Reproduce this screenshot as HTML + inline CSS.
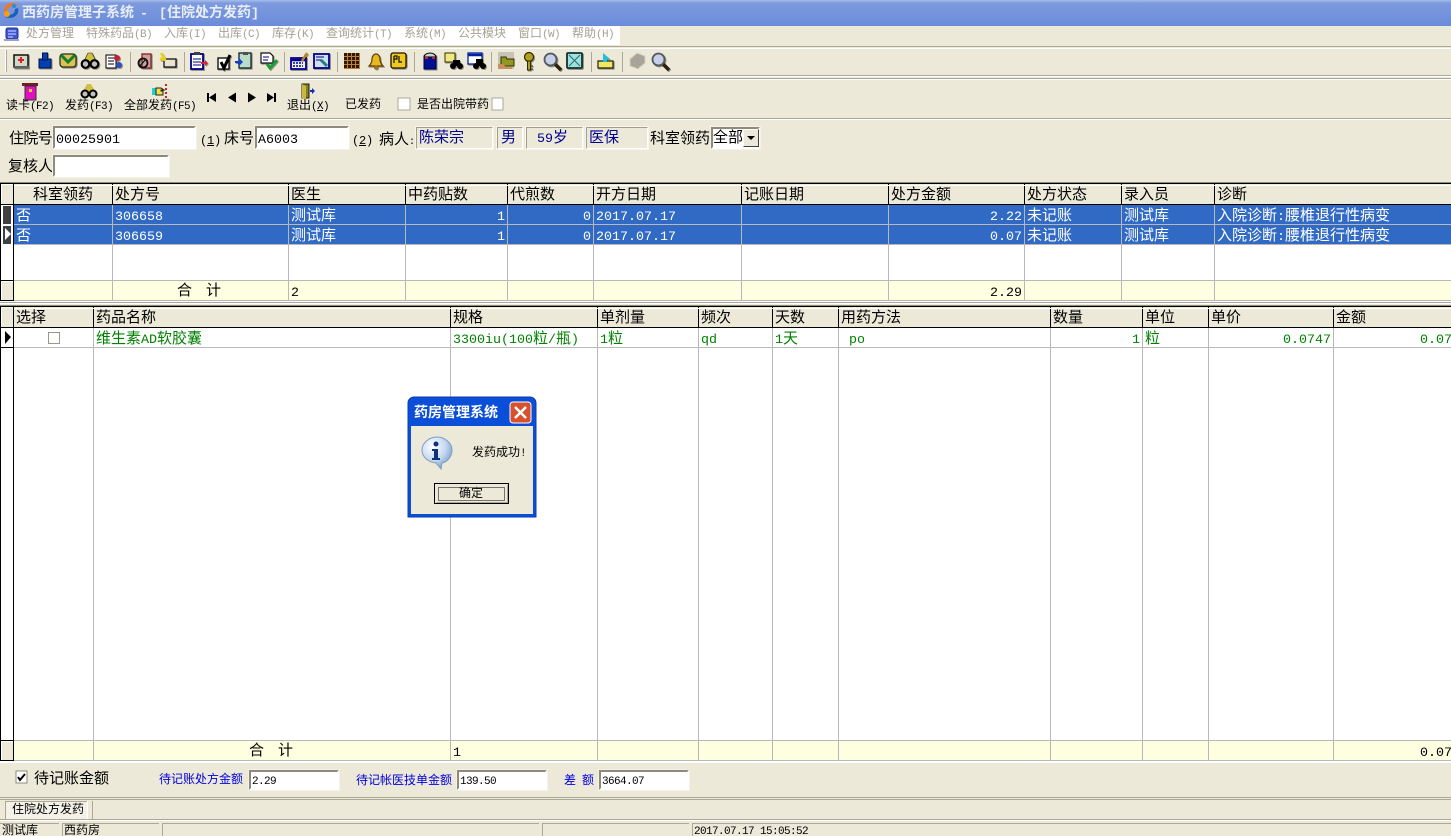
<!DOCTYPE html>
<html lang="zh"><head><meta charset="utf-8"><title>西药房管理子系统</title>
<style>
html,body{margin:0;padding:0;width:1451px;height:836px;overflow:hidden;background:#ece9d8}
#a{position:relative;width:1451px;height:836px;overflow:hidden;background:#ece9d8;font-family:"WenQuanYi Zen Hei","Noto Sans CJK SC",sans-serif;color:#000}
svg{position:absolute;left:0;top:0}
.t{position:absolute;white-space:nowrap;line-height:20px;font-size:15px}
.s{font-size:12px}.m{font-size:15px}
.r{text-align:right}
.w{color:#fff}.g{color:#008000}.b{color:#0000e0}.n{color:#000090}.y{color:#a5a294}
i{font-style:normal;font-family:"Liberation Mono",monospace}
.m i,.t i{font-size:13.33px}
.s i{font-size:11px;letter-spacing:-.6px}
.in{position:absolute;box-sizing:border-box;background:#fff;border:2px solid;border-color:#8e8b7c #fff #fff #8e8b7c;outline:1px solid #f4f2e8}
.lb{position:absolute;box-sizing:border-box;border:1px solid;border-color:#a09d8e #fff #fff #a09d8e;outline:1px solid #f7f5ec}
.ic{filter:drop-shadow(1px 1px 0 #8f8c7e)}
</style></head><body><div id="a">
<svg width="1451" height="836" viewBox="0 0 1451 836" xmlns="http://www.w3.org/2000/svg" shape-rendering="crispEdges">
<defs><linearGradient id="tb" x1="0" y1="0" x2="0" y2="1"><stop offset="0" stop-color="#a9bde9"/><stop offset=".12" stop-color="#7e9ade"/><stop offset="1" stop-color="#6b8cd9"/></linearGradient>
<radialGradient id="bub" cx=".35" cy=".3" r=".8"><stop offset="0" stop-color="#ffffff"/><stop offset=".55" stop-color="#c4d8f0"/><stop offset="1" stop-color="#6f95c8"/></radialGradient></defs>
<rect width="1451" height="26" fill="url(#tb)"/>
<rect y="26" width="620" height="19" fill="#fff"/>
<rect y="46" width="1451" height="1" fill="#aca899"/><rect y="48" width="1451" height="1" fill="#fff"/>
<rect y="75" width="1451" height="1" fill="#aca899"/><rect y="76" width="1451" height="1" fill="#fff"/><rect y="78" width="1451" height="1" fill="#aca899"/><rect y="79" width="1451" height="1" fill="#fff"/>
<rect y="118" width="1451" height="1" fill="#aca899"/><rect y="119" width="1451" height="1" fill="#fff"/>
<rect x="5" y="50" width="1" height="22" fill="#fff"/><rect x="6" y="50" width="1" height="22" fill="#aca899"/>
<path fill="#aca899" d="M130 52h1v20h-1zM184 52h1v20h-1zM284 52h1v20h-1zM337 52h1v20h-1zM414 52h1v20h-1zM491 52h1v20h-1zM591 52h1v20h-1zM622 52h1v20h-1z"/>

<rect y="182" width="1451" height="1" fill="#8e8b7c"/>
<rect y="183" width="1451" height="119" fill="#fff"/>
<rect y="184" width="1451" height="20" fill="#ece9d8"/>
<rect x="14" y="205" width="1437" height="39" fill="#316ac5"/>
<rect x="14" y="281" width="1437" height="19" fill="#fefee0"/>
<rect x="1" y="281" width="12" height="19" fill="#ece9d8"/>
<rect x="3" y="206" width="8" height="18" fill="#404040"/>
<rect x="3" y="226" width="8" height="18" fill="#404040"/>
<path fill="#fff" d="M5 228l6 6-6 6z" shape-rendering="auto"/>
<rect y="204" width="1451" height="1" fill="#000"/>
<path fill="#000" d="M112 184h1v20h-1zM288 184h1v20h-1zM405 184h1v20h-1zM507 184h1v20h-1zM593 184h1v20h-1zM741 184h1v20h-1zM888 184h1v20h-1zM1024 184h1v20h-1zM1121 184h1v20h-1zM1214 184h1v20h-1z"/>
<path fill="#b8b8b8" d="M112 205h1v96h-1zM288 205h1v96h-1zM405 205h1v96h-1zM507 205h1v96h-1zM593 205h1v96h-1zM741 205h1v96h-1zM888 205h1v96h-1zM1024 205h1v96h-1zM1121 205h1v96h-1zM1214 205h1v96h-1zM14 224h1437v1H14zM14 244h1437v1H14zM14 280h1437v1H14zM14 300h1437v1H14z"/>
<path fill="#fff" d="M1 184h12v1H1zM1 184h1v20H1zM14 185h1437v1H14zM1 281h12v1H1zM1 281h1v19H1z"/>
<rect x="0" y="183" width="1451" height="1" fill="#000"/>
<rect x="0" y="183" width="1" height="118" fill="#000"/>
<rect x="13" y="184" width="1" height="117" fill="#000"/>
<rect x="1" y="280" width="12" height="1" fill="#000"/>
<rect x="0" y="300" width="14" height="1" fill="#000"/>
<rect y="302" width="1451" height="1" fill="#aca899"/><rect y="303" width="1451" height="1" fill="#fff"/>

<rect y="305" width="1451" height="1" fill="#8e8b7c"/>
<rect y="306" width="1451" height="456" fill="#fff"/>
<rect y="307" width="1451" height="20" fill="#ece9d8"/>
<rect x="14" y="741" width="1437" height="19" fill="#fefee0"/>
<rect x="1" y="741" width="12" height="19" fill="#ece9d8"/>
<rect y="327" width="1451" height="1" fill="#000"/>
<path fill="#000" d="M93 307h1v20h-1zM450 307h1v20h-1zM597 307h1v20h-1zM698 307h1v20h-1zM772 307h1v20h-1zM838 307h1v20h-1zM1050 307h1v20h-1zM1142 307h1v20h-1zM1208 307h1v20h-1zM1333 307h1v20h-1z"/>
<path fill="#b8b8b8" d="M93 328h1v433h-1zM450 328h1v433h-1zM597 328h1v433h-1zM698 328h1v433h-1zM772 328h1v433h-1zM838 328h1v433h-1zM1050 328h1v433h-1zM1142 328h1v433h-1zM1208 328h1v433h-1zM1333 328h1v433h-1zM14 347h1437v1H14zM14 740h1437v1H14zM14 760h1437v1H14z"/>
<path fill="#fff" d="M1 307h12v1H1zM1 307h1v20H1zM14 308h1437v1H14zM1 741h12v1H1zM1 741h1v19H1z"/>
<rect x="0" y="306" width="1451" height="1" fill="#000"/>
<rect x="0" y="306" width="1" height="455" fill="#000"/>
<rect x="13" y="307" width="1" height="454" fill="#000"/>
<rect x="1" y="347" width="12" height="1" fill="#000"/>
<rect x="1" y="740" width="12" height="1" fill="#000"/>
<rect x="0" y="760" width="14" height="1" fill="#000"/>
<path fill="#000" d="M5 331l6 6-6 7z" shape-rendering="auto"/>
<rect x="48" y="332" width="11" height="11" fill="#fff" stroke="#9a9788" stroke-width="1" transform="translate(.5 .5)"/>

<rect y="762" width="1451" height="1" fill="#fff"/>
<rect y="797" width="1451" height="1" fill="#aca899"/><rect y="799" width="1451" height="1" fill="#aca899"/>
<rect y="819" width="1451" height="1" fill="#aca899"/><rect y="820" width="1451" height="1" fill="#fff"/>
<rect x="5" y="801" width="82" height="18" fill="#f4f2e8"/>
<path fill="#aca899" d="M5 801h82v1H5zM5 801h1v18H5z"/><path fill="#fff" d="M87 801h1v18h-1z"/><path fill="#aca899" d="M92 801h1v18h-1z"/>
<path fill="#aca899" d="M0 823h59v1H0zM62 823h97v1H62zM62 823h1v13h-1zM162 823h377v1H162zM162 823h1v13h-1zM542 823h147v1H542zM542 823h1v13h-1zM692 823h759v1H692zM692 823h1v13h-1z"/>
<rect x="16" y="771" width="11" height="12" fill="#fff" stroke="#8e8b7c"/>
<path d="M18 777l2 3 5-6" fill="none" stroke="#000" stroke-width="2" shape-rendering="auto"/>
<rect x="398" y="98" width="12" height="12" fill="#fff" stroke="#aca899"/>
<rect x="492" y="98" width="11" height="12" fill="#fff" stroke="#aca899"/>

<g shape-rendering="auto">
<path d="M4 12C3 6 9 1 17 4l-1 3c-5-2-9 0-9 5z" fill="#f07818"/><path d="M18 8c2 7-5 12-13 9l1-3c5 2 9 0 9-5z" fill="#1860c0"/><circle cx="7" cy="14" r="3" fill="#f0a020"/><circle cx="14" cy="6" r="2" fill="#2090e0"/>
<rect x="6" y="28" width="12" height="11" rx="2" fill="#4058d8" stroke="#203090"/><path d="M8 31h8M8 34h8M8 37h5" stroke="#d8e0ff"/><rect x="4" y="39" width="15" height="2" fill="#a0a0c0"/>

<g class="ic">
<g transform="translate(21 61)"><rect x="-7" y="-6" width="14" height="12" fill="#d0d8c8" stroke="#101010" stroke-width="1.500"/><path d="M-3-1h6M0-4v6" stroke="#e02020" stroke-width="2"/><rect x="-7" y="5" width="15" height="2.500" fill="#606060"/></g>
<g transform="translate(45 61)"><path d="M-6-2h12v9H-6z" fill="#0040b0" stroke="#001050"/><rect x="-2.500" y="-8" width="5" height="7" fill="#0040b0" stroke="#001050"/></g>
<g transform="translate(68 61)"><rect x="-8" y="-7" width="16" height="13" rx="3" fill="#e0c050" stroke="#203020" stroke-width="1.300"/><path d="M-7-6L0 1 7-6" fill="none" stroke="#108030" stroke-width="3"/></g>
<g transform="translate(90 61)"><path d="M-2-8h4L7 2H-7z" fill="#d0c040" stroke="#202020" stroke-width=".6"/><circle cx="-4.500" cy="3" r="3.800" fill="#c0c0c0" stroke="#000" stroke-width="2.200"/><circle cx="4.500" cy="3" r="3.800" fill="#c0c0c0" stroke="#000" stroke-width="2.200"/></g>
<g transform="translate(114 61)"><rect x="-8" y="-6" width="10" height="13" fill="#fff" stroke="#000"/><path d="M-6-3h6M-6 0h6M-6 3h6" stroke="#000"/><circle cx="3" cy="-3" r="3" fill="#c02040"/><circle cx="5" cy="4" r="3" fill="#3050c0"/></g>
<g transform="translate(145 61)"><rect x="-3" y="-7" width="9" height="14" fill="#d0a0a0" stroke="#802020" stroke-width="1.300"/><circle cx="-2" cy="2" r="4.500" fill="none" stroke="#101010" stroke-width="1.800"/><path d="M-6 6l7-8" stroke="#101010" stroke-width="1.300"/></g>
<g transform="translate(168 61)"><rect x="-4" y="-2" width="12" height="8" fill="#e8e4d0" stroke="#101010" stroke-width="1.300"/><path d="M-7-8l3 5-4 1 6 1" stroke="#e8d020" stroke-width="2.500" fill="none"/></g>
<g transform="translate(198 61)"><rect x="-7" y="-7" width="12" height="15" fill="#fff" stroke="#000080" stroke-width="1.800"/><rect x="-4" y="-9" width="6" height="3" fill="#404040"/><path d="M-5-2h8M-5 1h8M-5 4h8" stroke="#000080"/><path d="M3 1h4V-1l3 3-3 3V3H3z" fill="#e02040"/></g>
<g transform="translate(224 61)"><rect x="-6" y="-3" width="11" height="11" fill="#fff" stroke="#000" stroke-width="1.300"/><path d="M-3 1l3 6 6-13" fill="none" stroke="#000" stroke-width="3"/></g>
<g transform="translate(244 61)"><rect x="-5" y="-8" width="12" height="15" fill="#b8dcc8" stroke="#102030" stroke-width="1.300"/><rect x="-1" y="-9" width="5" height="3" fill="#505050"/><path d="M-9 0h4v-3l4 4-4 4V2h-4z" fill="#1040d0"/></g>
<g transform="translate(268 61)"><path d="M-7-8h9l3 3v7h-12z" fill="#fff" stroke="#101010" stroke-width="1.200"/><path d="M-5-4h6M-5-1h5" stroke="#000080"/><path d="M-1 3l3 4 7-8" fill="none" stroke="#10a030" stroke-width="2.800"/></g>
<g transform="translate(299 61)"><rect x="-8" y="-3" width="15" height="11" fill="#f0f0f0" stroke="#000090" stroke-width="1.800"/><path d="M-8-1h15" stroke="#000090" stroke-width="2.500"/><path d="M-6 2h10M-6 5h10" stroke="#000090" stroke-width="1.500" stroke-dasharray="2 1"/><path d="M3 0l5-8" stroke="#c08020" stroke-width="2.500"/></g>
<g transform="translate(322 61)"><rect x="-8" y="-7" width="15" height="14" fill="#d0e0e8" stroke="#000090" stroke-width="1.800"/><path d="M-6-4h8M-6-1h6" stroke="#000090"/><path d="M-1-1l6 6" stroke="#208080" stroke-width="3"/></g>
</g>
<g transform="translate(352 61)"><path d="M-8-8h16v16H-8z" fill="#c08030"/><path fill="#2a1808" d="M-8-8h3v3h-3zM-4-8h3v3h-3zM0-8h3v3H0zM4-8h3v3H4zM-8-4h3v3h-3zM-4-4h3v3h-3zM0-4h3v3H0zM4-4h3v3H4zM-8 0h3v3h-3zM-4 0h3v3h-3zM0 0h3v3H0zM4 0h3v3H4zM-8 4h3v3h-3zM-4 4h3v3h-3zM0 4h3v3H0zM4 4h3v3H4z"/></g>
<g class="ic">
<g transform="translate(376 61)"><path d="M-7 5c2-2 3-4 3-7a4 5 0 0 1 8 0c0 3 1 5 3 7z" fill="#e8b820" stroke="#604008" stroke-width="1.200"/><circle cy="6.500" r="2" fill="#a07010"/></g>
<g transform="translate(399 61)"><rect x="-8" y="-8" width="15" height="15" rx="2" fill="#f0c820" stroke="#201000" stroke-width="1.300"/><path d="M-5-5v7M-5-5h3v3h-3M0-5v6h3" stroke="#101000" fill="none" stroke-width="1.200"/></g>
<g transform="translate(430 61)"><rect x="-6" y="-5" width="12" height="13" fill="#001090" stroke="#000040"/><path d="M-6-4a6 4 0 0 1 12 0z" fill="#d0d0d0" stroke="#000"/><path d="M-5-3h3M2-3h3" stroke="#d02020" stroke-width="2"/></g>
<g transform="translate(453 61)"><rect x="-8" y="-8" width="10" height="9" fill="#f0e880" stroke="#303000"/><circle cx="0" cy="5" r="3" fill="#000"/><circle cx="7" cy="5" r="3" fill="#000"/><path d="M0-1h7v6H0z" fill="#000"/></g>
<g transform="translate(476 61)"><rect x="-8" y="-8" width="14" height="11" fill="#fff" stroke="#0020a0" stroke-width="1.300"/><path d="M-8-6h14" stroke="#0020a0" stroke-width="2.500"/><circle cx="0" cy="5" r="3" fill="#000"/><circle cx="7" cy="5" r="3" fill="#000"/><path d="M0-2h7v7H0z" fill="#000"/></g>
</g>
<g transform="translate(507 61)"><rect x="-9" y="-9" width="16" height="17" fill="#c8c4b4"/><path d="M-6-4h5l1 2h7v7H-6z" fill="#909820" stroke="#303000"/><path d="M-9 3h5l3 3h6v2H-9z" fill="#c89060"/></g>
<g class="ic">
<g transform="translate(529 61)"><circle cy="-4" r="4.500" fill="#b0a020" stroke="#302800" stroke-width="1.200"/><path d="M-1.500 0h3v9h-3zM1 5h3M1 8h3" fill="#b0a020" stroke="#302800"/></g>
<g transform="translate(552 61)"><path d="M3 3l6 6" stroke="#302010" stroke-width="3.500"/><circle cx="-1.500" cy="-1.500" r="6" fill="#c8d0e8" stroke="#505860" stroke-width="1.800"/></g>
<g transform="translate(575 61)"><rect x="-8" y="-8" width="15" height="15" rx="1" fill="#a0e0e0" stroke="#103030" stroke-width="1.800"/><path d="M-6-6L5 5M5-6L-6 5" stroke="#207070"/></g>
<g transform="translate(606 61)"><path d="M-8 0h15v7H-8z" fill="#f0e860" stroke="#202010" stroke-width="1.200"/><path d="M-3-8l7 6h-3v3h-4z" fill="#20c0e0"/></g>
</g>
<g transform="translate(638 61)"><path d="M-8-2l7-6 8 3v7l-7 6-8-3z" fill="#a8a598" stroke="#d8d4c4"/></g>
<g class="ic"><g transform="translate(660 61)"><path d="M3 3l6 6" stroke="#302010" stroke-width="3.500"/><circle cx="-1.500" cy="-1.500" r="6" fill="#c8d0e8" stroke="#505860" stroke-width="1.800"/></g></g>

<g transform="translate(30 92)"><rect x="-8" y="-9" width="16" height="3" fill="#702020"/><rect x="-5" y="-6" width="11" height="14" fill="#e010c0" stroke="#303030"/><rect x="-1" y="-3" width="3" height="3" fill="#e0d020"/></g>
<g transform="translate(89 91)"><path d="M-2-7h4L7 2H-7z" fill="#d0c040"/><circle cx="-4" cy="3" r="3.500" fill="#c0c0c0" stroke="#000" stroke-width="2"/><circle cx="4" cy="3" r="3.500" fill="#c0c0c0" stroke="#000" stroke-width="2"/></g>
<g transform="translate(160 91)"><path d="M-8-3h4v7h-4z" fill="#20d0d0"/><path d="M-4-3h5l3 2h-3v1h2v4h-7z" fill="#f0e040" stroke="#202020"/><path d="M6-7v2M6-3v2M6 1v2M6 5v2" stroke="#d02020" stroke-width="2"/></g>
<path fill="#000" d="M207 93h2v9h-2zM209 97.500l7-4.500v9zM228 97.500l8-5v10zM248 92.500l8 5-8 5zM267 93l7 4.500-7 4.500zM274 93h2v9h-2z"/>
<g transform="translate(306 91)"><path d="M-4-7h7v14h-7z" fill="#808020" stroke="#202000"/><path d="M-4-7l4 2v13l-4-1z" fill="#c8b840"/><path d="M4-1h2v-2l3 3-3 3V1H4z" fill="#1030c0"/></g>

<path d="M408 517V403a6 6 0 0 1 6-6h116a6 6 0 0 1 6 6v114z" fill="#0b4fd8" stroke="#0a3cb0" stroke-width="1"/>
<rect x="411" y="426" width="122" height="88" fill="#ece9d8"/>
<rect x="510" y="402" width="21" height="21" rx="3" fill="#d8502c" stroke="#fff"/>
<path d="M515 407l11 11M526 407l-11 11" stroke="#fff" stroke-width="2.500"/>
<path d="M437 437c8 0 15 6 15 13 0 7-5 12-10 13l-1 6-5-6c-8-1-14-6-14-13 0-7 7-13 15-13z" fill="url(#bub)" stroke="#7f9cc4"/>
<circle cx="436" cy="444" r="2.500" fill="#0c3278"/>
<path d="M432 449h6v9h2v2h-8v-2h2v-7h-2z" fill="#0c3278"/>
</g>
<rect x="434.500" y="483.500" width="74" height="20" fill="#ece9d8" stroke="#000"/>
<rect x="438.500" y="487.500" width="66" height="13" fill="none" stroke="#000" stroke-dasharray="1 1"/>
<path d="M507.500 485v17.500h-71" fill="none" stroke="#aca899"/>
</svg>

<div class="t w" style="left:22px;top:2px;font-size:14px;font-weight:bold;color:#e8edf8">西药房管理子系统</div>
<div class="t" style="left:140px;top:2px;color:#e8edf8;font-weight:bold"><i>-</i></div>
<div class="t" style="left:159px;top:2px;font-size:14px;font-weight:bold;color:#e8edf8"><i>[</i>住院处方发药<i>]</i></div>
<div class="t s y" style="left:26px;top:23px">处方管理</div>
<div class="t s y" style="left:86px;top:23px">特殊药品<i>(B)</i></div>
<div class="t s y" style="left:164px;top:23px">入库<i>(I)</i></div>
<div class="t s y" style="left:218px;top:23px">出库<i>(C)</i></div>
<div class="t s y" style="left:272px;top:23px">库存<i>(K)</i></div>
<div class="t s y" style="left:326px;top:23px">查询统计<i>(T)</i></div>
<div class="t s y" style="left:404px;top:23px">系统<i>(M)</i></div>
<div class="t s y" style="left:458px;top:23px">公共模块</div>
<div class="t s y" style="left:518px;top:23px">窗口<i>(W)</i></div>
<div class="t s y" style="left:572px;top:23px">帮助<i>(H)</i></div>

<div class="t s" style="left:6px;top:95px">读卡<i>(F2)</i></div>
<div class="t s" style="left:65px;top:95px">发药<i>(F3)</i></div>
<div class="t s" style="left:124px;top:95px">全部发药<i>(F5)</i></div>
<div class="t s" style="left:287px;top:95px">退出<i>(<u>X</u>)</i></div>
<div class="t s" style="left:345px;top:94px">已发药</div>
<div class="t s" style="left:417px;top:94px">是否出院带药</div>

<div class="t m" style="left:9px;top:128px;letter-spacing:-.6px">住院号</div>
<div class="in" style="left:53px;top:126px;width:143px;height:23px"></div>
<div class="t m" style="left:56px;top:128px"><i>00025901</i></div>
<div class="t m" style="left:200px;top:129px"><i style="font-size:12px;letter-spacing:-.2px">(<u>1</u>)</i></div>
<div class="t m" style="left:224px;top:128px">床号</div>
<div class="in" style="left:255px;top:126px;width:94px;height:23px"></div>
<div class="t m" style="left:258px;top:128px"><i>A6003</i></div>
<div class="t m" style="left:352px;top:129px"><i style="font-size:12px;letter-spacing:-.2px">(<u>2</u>)</i></div>
<div class="t m" style="left:379px;top:129px">病人<i style="font-size:10px">:</i></div>
<div class="lb" style="left:416px;top:127px;width:77px;height:22px"></div>
<div class="t m n" style="left:419px;top:127px">陈荣宗</div>
<div class="lb" style="left:497px;top:127px;width:26px;height:22px"></div>
<div class="t m n" style="left:501px;top:127px">男</div>
<div class="lb" style="left:526px;top:127px;width:57px;height:22px"></div>
<div class="t m n" style="left:537px;top:127px"><i>59</i>岁</div>
<div class="lb" style="left:586px;top:127px;width:62px;height:22px"></div>
<div class="t m n" style="left:589px;top:127px">医保</div>
<div class="t m" style="left:650px;top:128px">科室领药</div>
<div class="in" style="left:711px;top:127px;width:49px;height:22px"></div>
<div class="t m" style="left:713px;top:127px">全部</div>
<div style="position:absolute;left:743px;top:129px;width:16px;height:18px;box-sizing:border-box;background:#ece9d8;border:1px solid;border-color:#fff #404040 #404040 #fff"></div>
<div style="position:absolute;left:747px;top:136px;width:0;height:0;border:4px solid transparent;border-top:4px solid #000;border-bottom:0"></div>
<div class="t m" style="left:8px;top:156px">复核人</div>
<div class="in" style="left:53px;top:155px;width:116px;height:22px"></div>

<div class="t m" style="left:33px;top:184px">科室领药</div>
<div class="t m" style="left:115px;top:184px">处方号</div>
<div class="t m" style="left:291px;top:184px">医生</div>
<div class="t m" style="left:408px;top:184px">中药贴数</div>
<div class="t m" style="left:510px;top:184px">代煎数</div>
<div class="t m" style="left:596px;top:184px">开方日期</div>
<div class="t m" style="left:744px;top:184px">记账日期</div>
<div class="t m" style="left:891px;top:184px">处方金额</div>
<div class="t m" style="left:1027px;top:184px">处方状态</div>
<div class="t m" style="left:1124px;top:184px">录入员</div>
<div class="t m" style="left:1217px;top:184px">诊断</div>

<div class="t m w" style="left:16px;top:205px">否</div>
<div class="t m w" style="left:115px;top:205px"><i>306658</i></div>
<div class="t m w" style="left:291px;top:205px">测试库</div>
<div class="t m w r" style="left:406px;top:205px;width:99px"><i>1</i></div>
<div class="t m w r" style="left:508px;top:205px;width:83px"><i>0</i></div>
<div class="t m w" style="left:596px;top:205px"><i>2017.07.17</i></div>
<div class="t m w r" style="left:889px;top:205px;width:133px"><i>2.22</i></div>
<div class="t m w" style="left:1027px;top:205px">未记账</div>
<div class="t m w" style="left:1124px;top:205px">测试库</div>
<div class="t m w" style="left:1217px;top:205px">入院诊断<i>:</i>腰椎退行性病变</div>

<div class="t m w" style="left:16px;top:225px">否</div>
<div class="t m w" style="left:115px;top:225px"><i>306659</i></div>
<div class="t m w" style="left:291px;top:225px">测试库</div>
<div class="t m w r" style="left:406px;top:225px;width:99px"><i>1</i></div>
<div class="t m w r" style="left:508px;top:225px;width:83px"><i>0</i></div>
<div class="t m w" style="left:596px;top:225px"><i>2017.07.17</i></div>
<div class="t m w r" style="left:889px;top:225px;width:133px"><i>0.07</i></div>
<div class="t m w" style="left:1027px;top:225px">未记账</div>
<div class="t m w" style="left:1124px;top:225px">测试库</div>
<div class="t m w" style="left:1217px;top:225px">入院诊断<i>:</i>腰椎退行性病变</div>

<div class="t m" style="left:177px;top:280px">合<span style="margin-left:14px">计</span></div>
<div class="t m" style="left:291px;top:281px"><i>2</i></div>
<div class="t m r" style="left:889px;top:281px;width:133px"><i>2.29</i></div>

<div class="t m" style="left:16px;top:307px">选择</div>
<div class="t m" style="left:96px;top:307px">药品名称</div>
<div class="t m" style="left:453px;top:307px">规格</div>
<div class="t m" style="left:600px;top:307px">单剂量</div>
<div class="t m" style="left:701px;top:307px">频次</div>
<div class="t m" style="left:775px;top:307px">天数</div>
<div class="t m" style="left:841px;top:307px">用药方法</div>
<div class="t m" style="left:1053px;top:307px">数量</div>
<div class="t m" style="left:1145px;top:307px">单位</div>
<div class="t m" style="left:1211px;top:307px">单价</div>
<div class="t m" style="left:1336px;top:307px">金额</div>

<div class="t m g" style="left:96px;top:328px">维生素<i>AD</i>软胶囊</div>
<div class="t m g" style="left:453px;top:328px"><i>3300iu(100</i>粒<i>/</i>瓶<i>)</i></div>
<div class="t m g" style="left:600px;top:328px"><i>1</i>粒</div>
<div class="t m g" style="left:701px;top:328px"><i>qd</i></div>
<div class="t m g" style="left:775px;top:328px"><i>1</i>天</div>
<div class="t m g" style="left:849px;top:328px"><i>po</i></div>
<div class="t m g r" style="left:1051px;top:328px;width:89px"><i>1</i></div>
<div class="t m g" style="left:1145px;top:328px">粒</div>
<div class="t m g r" style="left:1209px;top:328px;width:122px"><i>0.0747</i></div>
<div class="t m g" style="left:1420px;top:328px"><i>0.07</i></div>

<div class="t m" style="left:249px;top:740px">合<span style="margin-left:14px">计</span></div>
<div class="t m" style="left:453px;top:741px"><i>1</i></div>
<div class="t m" style="left:1420px;top:741px"><i>0.07</i></div>

<div class="t" style="left:34px;top:768px">待记账金额</div>
<div class="t s b" style="left:159px;top:769px">待记账处方金额</div>
<div class="in" style="left:249px;top:770px;width:90px;height:20px"></div>
<div class="t s" style="left:252px;top:770px"><i>2.29</i></div>
<div class="t s b" style="left:356px;top:770px">待记帐医技单金额</div>
<div class="in" style="left:457px;top:770px;width:90px;height:20px"></div>
<div class="t s" style="left:460px;top:770px"><i>139.50</i></div>
<div class="t s b" style="left:564px;top:770px">差<span style="margin-left:6px">额</span></div>
<div class="in" style="left:599px;top:770px;width:90px;height:20px"></div>
<div class="t s" style="left:602px;top:770px"><i>3664.07</i></div>

<div class="t s" style="left:12px;top:799px">住院处方发药</div>
<div class="t s" style="left:2px;top:820px">测试库</div>
<div class="t s" style="left:64px;top:820px">西药房</div>
<div class="t s" style="left:694px;top:820px"><i>2017.07.17 15:05:52</i></div>

<div class="t w" style="left:414px;top:402px;font-size:14px;font-weight:bold">药房管理系统</div>
<div class="t s" style="left:472px;top:442px">发药成功<i>!</i></div>
<div class="t s" style="left:459px;top:483px">确定</div>
</div></body></html>
